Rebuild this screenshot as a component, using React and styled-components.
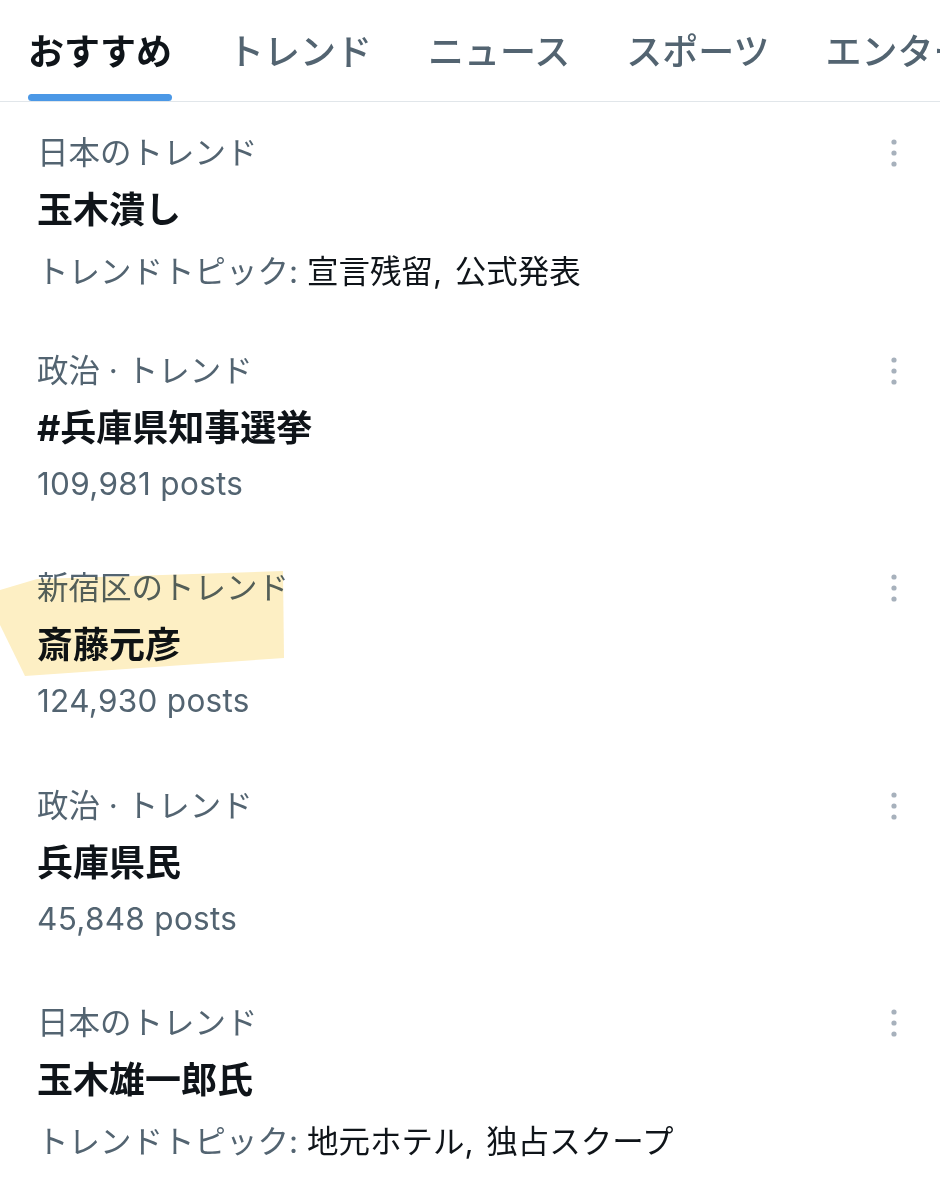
import React from 'react';
import styled, { createGlobalStyle } from 'styled-components';

const GlobalStyle = createGlobalStyle`
  body {
    margin: 0;
    background: #ffffff;
    font-family: "Inter", "Noto Sans CJK JP", sans-serif;
  }
`;

const Page = styled.div`
  width: 940px;
  height: 1200px;
  overflow: hidden;
  background: #ffffff;
`;

const TabBar = styled.nav`
  display: flex;
  gap: 56px;
  padding-left: 28px;
  border-bottom: 1px solid #e1e6ea;
  white-space: nowrap;
  overflow: hidden;
`;

const Tab = styled.div`
  display: flex;
  flex-direction: column;
  align-items: stretch;
  flex-shrink: 0;
  padding-top: 27px;
  font-size: 36px;
  line-height: 44px;
  font-weight: ${({ $active }) => ($active ? 700 : 500)};
  color: ${({ $active }) => ($active ? '#0f1419' : '#536471')};
  font-family: "Noto Sans CJK JP", sans-serif;
`;

const Underline = styled.div`
  margin-top: 23px;
  height: 7px;
  border-radius: 4px;
  background: ${({ $active }) => ($active ? '#4b98e6' : 'transparent')};
`;

const List = styled.div`
  display: flex;
  flex-direction: column;
`;

const Item = styled.div`
  position: relative;
  height: 217.5px;
  box-sizing: border-box;
  padding: 29px 46px 0 37px;
  display: flex;
  justify-content: space-between;
`;

const Body = styled.div`
  display: flex;
  flex-direction: column;
`;

const Category = styled.div`
  font-size: 31.5px;
  line-height: 44px;
  color: #536471;
`;

const Title = styled.div`
  font-size: 36px;
  line-height: 70px;
  font-weight: 700;
  color: #0f1419;
`;

const Sub = styled.div`
  margin-top: ${({ $topic }) => ($topic ? '6px' : '0')};
  font-size: 31.5px;
  line-height: 42px;
  letter-spacing: ${({ $topic }) => ($topic ? '0' : '0.3px')};
  color: #536471;
`;

const TopicWords = styled.span`
  color: #0f1419;
  word-spacing: 4px;
`;

const More = styled.svg`
  width: 12px;
  height: 36px;
  margin-top: 4px;
  margin-right: -6px;
  flex-shrink: 0;
`;

const Highlight = styled.svg`
  position: absolute;
  left: 0;
  top: 30px;
  width: 290px;
  height: 115px;
  mix-blend-mode: multiply;
  pointer-events: none;
`;

const tabs = ['おすすめ', 'トレンド', 'ニュース', 'スポーツ', 'エンターテインメント'];

const trends = [
  { cat: '日本のトレンド', title: '玉木潰し', topic: '宣言残留, 公式発表' },
  { cat: '政治 · トレンド', title: '#兵庫県知事選挙', posts: '109,981 posts' },
  { cat: '新宿区のトレンド', title: '斎藤元彦', posts: '124,930 posts', marked: true },
  { cat: '政治 · トレンド', title: '兵庫県民', posts: '45,848 posts' },
  { cat: '日本のトレンド', title: '玉木雄一郎氏', topic: '地元ホテル, 独占スクープ' },
];

const MoreIcon = () => (
  <More viewBox="0 0 12 36">
    <circle cx="6" cy="7" r="2.6" fill="#a7b1bc" />
    <circle cx="6" cy="18" r="2.6" fill="#a7b1bc" />
    <circle cx="6" cy="29" r="2.6" fill="#a7b1bc" />
  </More>
);

const App = () => (
  <Page>
    <GlobalStyle />
    <TabBar>
      {tabs.map((t, i) => (
        <Tab key={t} $active={i === 0}>
          <span>{t}</span>
          <Underline $active={i === 0} />
        </Tab>
      ))}
    </TabBar>
    <List>
      {trends.map((t) => (
        <Item key={t.title}>
          <Body>
            <Category>{t.cat}</Category>
            <Title>{t.title}</Title>
            {t.topic ? (
              <Sub $topic>
                トレンドトピック: <TopicWords>{t.topic}</TopicWords>
              </Sub>
            ) : (
              <Sub>{t.posts}</Sub>
            )}
          </Body>
          <MoreIcon />
          {t.marked && (
            <Highlight viewBox="0 0 290 115">
              <polygon points="0,23 37,12 283,4 284,91 25,109 0,58" fill="#fdefc4" />
            </Highlight>
          )}
        </Item>
      ))}
    </List>
  </Page>
);

export default App;
